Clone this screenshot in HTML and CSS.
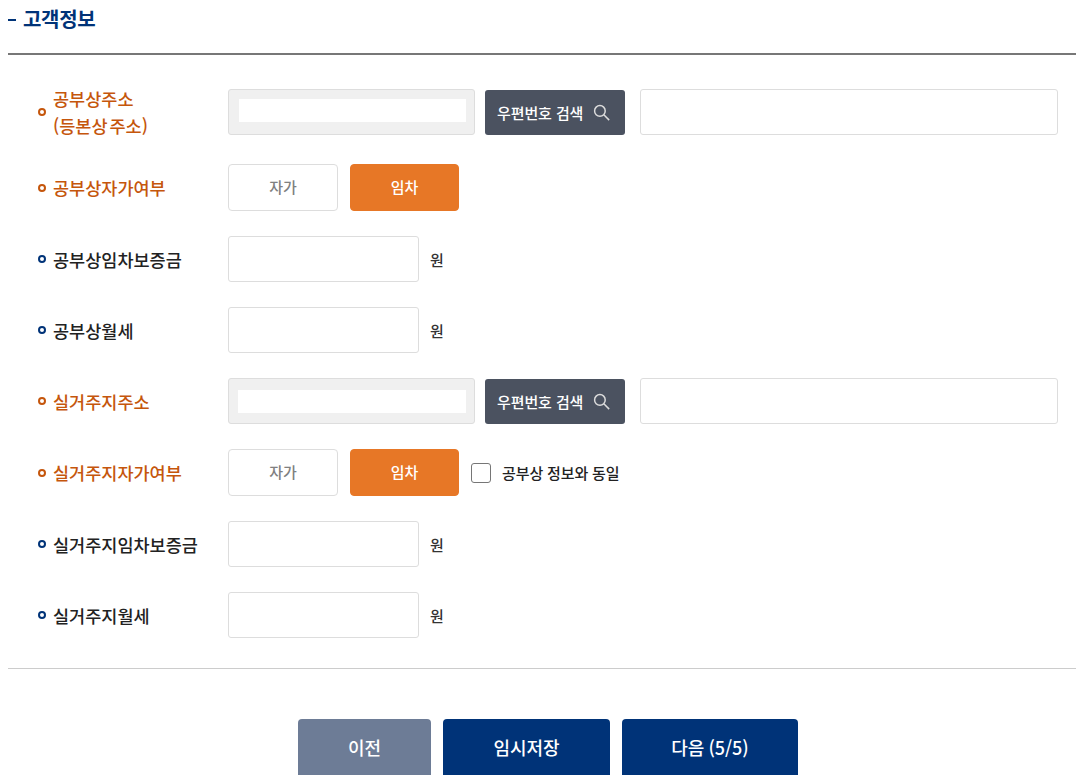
FILE: index.html
```html
<!DOCTYPE html>
<html lang="ko">
<head>
  <meta charset="UTF-8" />
  <title>고객정보</title>
  <link rel="stylesheet" href="styles.css">
</head>
<body>
  <h2 class="section-title"><span class="dash"></span>고객정보</h2>

  <div class="form">
    <div class="row row-tall">
      <div class="label required">공부상주소<br>(등본상 주소)</div>
      <div class="address-box"><div class="address-inner"></div></div>
      <button class="search-btn">우편번호 검색
        <svg class="search-icon" viewBox="0 0 16 16"><circle cx="6.5" cy="6.5" r="5"/><path d="M10.2 10.2 L15.2 15.2"/></svg>
      </button>
      <input class="detail-input" type="text">
    </div>

    <div class="row row-toggle">
      <div class="label required">공부상자가여부</div>
      <button class="toggle">자가</button>
      <button class="toggle active">임차</button>
    </div>

    <div class="row">
      <div class="label">공부상임차보증금</div>
      <input class="money-input" type="text">
      <span class="unit">원</span>
    </div>

    <div class="row">
      <div class="label">공부상월세</div>
      <input class="money-input" type="text">
      <span class="unit">원</span>
    </div>

    <div class="row">
      <div class="label required">실거주지주소</div>
      <div class="address-box address-box-low"><div class="address-inner"></div></div>
      <button class="search-btn">우편번호 검색
        <svg class="search-icon" viewBox="0 0 16 16"><circle cx="6.5" cy="6.5" r="5"/><path d="M10.2 10.2 L15.2 15.2"/></svg>
      </button>
      <input class="detail-input" type="text">
    </div>

    <div class="row row-toggle">
      <div class="label required">실거주지자가여부</div>
      <button class="toggle">자가</button>
      <button class="toggle active">임차</button>
      <label class="same-check"><span class="check-box"></span>공부상 정보와 동일</label>
    </div>

    <div class="row">
      <div class="label">실거주지임차보증금</div>
      <input class="money-input" type="text">
      <span class="unit">원</span>
    </div>

    <div class="row">
      <div class="label">실거주지월세</div>
      <input class="money-input" type="text">
      <span class="unit">원</span>
    </div>
  </div>

  <hr class="bottom-line">

  <div class="actions">
    <button class="action-btn prev">이전</button>
    <button class="action-btn save">임시저장</button>
    <button class="action-btn next">다음 (5/5)</button>
  </div>
</body>
</html>
```

FILE: styles.css
```css
*, *::before {
  box-sizing: border-box;
  font-family: "Noto Sans CJK KR", "Noto Sans", sans-serif;
}
html, body {
  overflow: hidden;
}
body {
  margin: 0;
  padding-left: 8px;
  height: 775px;
  background: #fff;
  color: #222;
}
button {
  cursor: pointer;
}
.section-title {
  margin: 0;
  height: 55px;
  padding-top: 5px;
  border-bottom: 2px solid #777;
  font-size: 20px;
  line-height: 28px;
  font-weight: 700;
  letter-spacing: -0.3px;
  color: #003378;
  display: flex;
  align-items: flex-start;
}
.dash {
  width: 8px;
  height: 2px;
  background: #003378;
  margin: 14px 7px 0 0;
}
.form {
  padding: 30px 18px 0 30px;
  display: flex;
  flex-direction: column;
  gap: 25px;
}
.row {
  display: flex;
  align-items: center;
  height: 46px;
}
.row-tall {
  height: 54px;
}
.row-toggle {
  height: 47px;
}
.label {
  position: relative;
  width: 190px;
  padding-left: 15px;
  font-size: 17.5px;
  line-height: 27px;
  font-weight: 500;
  word-spacing: -3px;
  color: #222;
}
.label::before {
  content: "";
  position: absolute;
  left: 0;
  top: 50%;
  width: 8px;
  height: 8px;
  margin-top: -4px;
  border: 2px solid #003378;
  border-radius: 50%;
}
.label.required {
  color: #c5560c;
}
.label.required::before {
  border-color: #c5560c;
}
.address-box {
  width: 247px;
  height: 46px;
  padding: 9px 8px 0 10px;
  background: #f0f0f0;
  border: 1px solid #ddd;
  border-radius: 3px;
}
.address-box-low {
  padding: 11px 8px 0 9px;
}
.address-inner {
  height: 23px;
  background: #fff;
}
.search-btn {
  display: flex;
  align-items: center;
  justify-content: space-between;
  width: 140px;
  height: 45px;
  margin-left: 10px;
  padding: 0 15px 0 12px;
  background: #4b5260;
  border: none;
  border-radius: 3px;
  color: #fff;
  font-size: 15px;
  font-weight: 500;
  letter-spacing: -0.1px;
}
.search-icon {
  width: 17px;
  height: 17px;
  fill: none;
  stroke: #dcdcdc;
  stroke-width: 1.4;
}
.detail-input {
  width: 418px;
  height: 46px;
  margin-left: 15px;
  background: #fff;
  border: 1px solid #ddd;
  border-radius: 3px;
}
.toggle {
  width: 110px;
  height: 47px;
  padding-bottom: 3px;
  background: #fff;
  border: 1px solid #ddd;
  border-radius: 4px;
  color: #808080;
  font-size: 15px;
  font-weight: 500;
}
.toggle.active {
  width: 109px;
  margin-left: 12px;
  background: #e77726;
  border-color: #e77726;
  color: #fff;
}
.same-check {
  display: flex;
  align-items: center;
  margin-left: 12px;
  font-size: 15px;
  font-weight: 500;
  word-spacing: -0.6px;
  color: #222;
}
.check-box {
  width: 20px;
  height: 20px;
  margin-right: 11px;
  background: #fff;
  border: 1px solid #767676;
  border-radius: 3px;
}
.money-input {
  width: 191px;
  height: 46px;
  background: #fff;
  border: 1px solid #ddd;
  border-radius: 3px;
}
.unit {
  margin-left: 11px;
  font-size: 15px;
  font-weight: 500;
  color: #333;
}
.bottom-line {
  margin: 30px 0 0;
  height: 1px;
  border: none;
  background: #ccc;
}
.actions {
  display: flex;
  justify-content: center;
  gap: 12px;
  margin-top: 50px;
  padding-left: 12px;
}
.action-btn {
  height: 60px;
  padding-bottom: 5px;
  border: none;
  border-radius: 4px;
  color: #fff;
  font-size: 18px;
  font-weight: 500;
  word-spacing: -1px;
}
.prev {
  width: 133px;
  background: #6d7c96;
}
.save {
  width: 167px;
  background: #003378;
}
.next {
  width: 176px;
  background: #003378;
}
```
